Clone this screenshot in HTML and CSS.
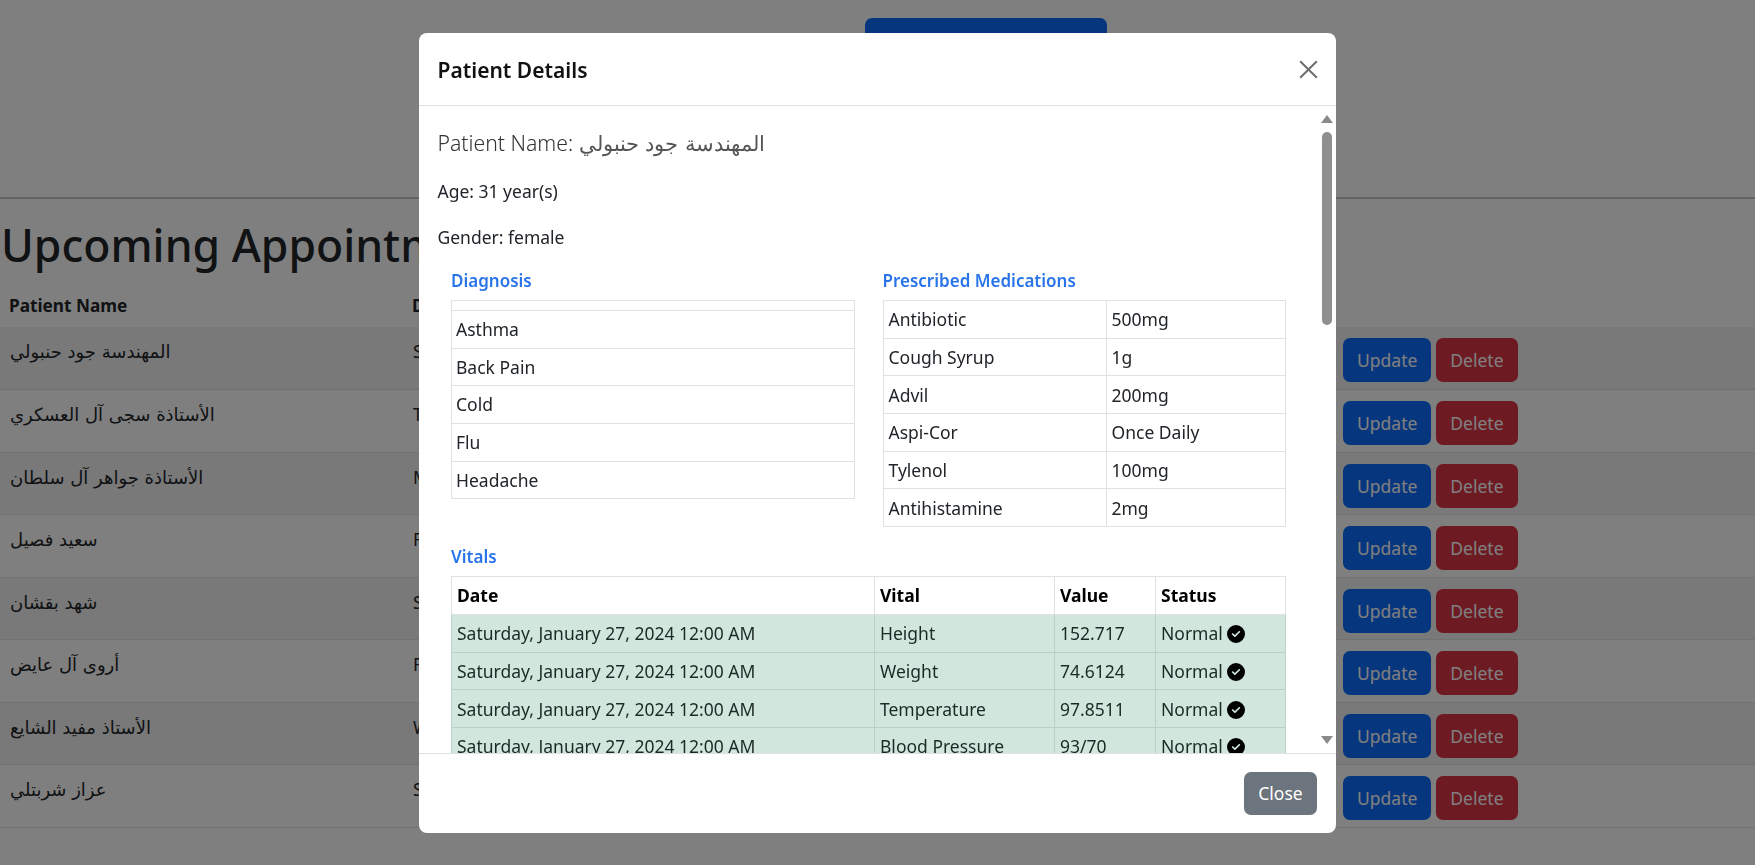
FILE: index.html
```html
<!DOCTYPE html>
<html lang="en">
<head>
<meta charset="utf-8">
<title>Patient Details</title>
<link rel="stylesheet" href="styles.css">
</head>
<body>
<svg class="defs" aria-hidden="true"><symbol id="check" viewBox="0 0 512 512"><path d="M256 512A256 256 0 1 0 256 0a256 256 0 1 0 0 512zM369 209L241 337c-9.400 9.400-24.600 9.400-33.900 0l-64-64c-9.400-9.400-9.400-24.600 0-33.900s24.600-9.400 33.900 0l47 47L335 175c9.400-9.400 24.600-9.400 33.900 0s9.400 24.600 0 33.900z"/></symbol></svg>
<div class="page">
  <div class="top"><button class="btn btn-primary top-btn">Schedule Appointment</button></div>
  <hr class="rule">
  <h1 class="page-title">Upcoming Appointments</h1>
  <table class="appts">
    <thead><tr><th class="c-name">Patient Name</th><th class="c-date">Date</th><th class="c-act"></th></tr></thead>
    <tbody>
      <tr><td><span class="ar">المهندسة جود حنبولي</span></td><td>Saturday</td><td><div class="acts"><button class="btn btn-primary">Update</button><button class="btn btn-danger">Delete</button></div></td></tr>
      <tr><td><span class="ar">الأستاذة سجى آل العسكري</span></td><td>Tuesday</td><td><div class="acts"><button class="btn btn-primary">Update</button><button class="btn btn-danger">Delete</button></div></td></tr>
      <tr><td><span class="ar">الأستاذة جواهر آل سلطان</span></td><td>Monday</td><td><div class="acts"><button class="btn btn-primary">Update</button><button class="btn btn-danger">Delete</button></div></td></tr>
      <tr><td><span class="ar">سعيد فصيل</span></td><td>Friday</td><td><div class="acts"><button class="btn btn-primary">Update</button><button class="btn btn-danger">Delete</button></div></td></tr>
      <tr><td><span class="ar">شهد بقشان</span></td><td>Saturday</td><td><div class="acts"><button class="btn btn-primary">Update</button><button class="btn btn-danger">Delete</button></div></td></tr>
      <tr><td><span class="ar">أروى آل عايض</span></td><td>Friday</td><td><div class="acts"><button class="btn btn-primary">Update</button><button class="btn btn-danger">Delete</button></div></td></tr>
      <tr><td><span class="ar">الأستاذ مفيد الشايع</span></td><td>Wednesday</td><td><div class="acts"><button class="btn btn-primary">Update</button><button class="btn btn-danger">Delete</button></div></td></tr>
      <tr><td><span class="ar">عزاز شربتلي</span></td><td>Saturday</td><td><div class="acts"><button class="btn btn-primary">Update</button><button class="btn btn-danger">Delete</button></div></td></tr>
    </tbody>
  </table>
</div>
<div class="backdrop"></div>
<div class="modal">
  <div class="modal-header">
    <h5 class="modal-title">Patient Details</h5>
    <svg class="close-x" viewBox="0 0 16 16" aria-label="Close"><path d="M1 1l14 14M15 1L1 15"/></svg>
  </div>
  <div class="modal-body">
    <h5 class="pname">Patient Name: <span class="ar">المهندسة جود حنبولي</span></h5>
    <p class="info info-age">Age: 31 year(s)</p>
    <p class="info info-gender">Gender: female</p>
    <div class="cols">
      <div class="col">
        <h6 class="sub">Diagnosis</h6>
        <div class="dlist">
          <div class="ditem ditem-empty"></div>
          <div class="ditem">Asthma</div>
          <div class="ditem">Back Pain</div>
          <div class="ditem">Cold</div>
          <div class="ditem">Flu</div>
          <div class="ditem">Headache</div>
        </div>
      </div>
      <div class="col">
        <h6 class="sub">Prescribed Medications</h6>
        <table class="grid meds">
          <tr><td class="m1">Antibiotic</td><td>500mg</td></tr>
          <tr><td>Cough Syrup</td><td>1g</td></tr>
          <tr><td>Advil</td><td>200mg</td></tr>
          <tr><td>Aspi-Cor</td><td>Once Daily</td></tr>
          <tr><td>Tylenol</td><td>100mg</td></tr>
          <tr><td>Antihistamine</td><td>2mg</td></tr>
        </table>
      </div>
    </div>
    <h6 class="sub sub-vitals">Vitals</h6>
    <table class="grid vitals">
      <thead><tr><th class="v1">Date</th><th class="v2">Vital</th><th class="v3">Value</th><th>Status</th></tr></thead>
      <tbody>
        <tr><td>Saturday, January 27, 2024 12:00 AM</td><td>Height</td><td>152.717</td><td>Normal <svg class="check"><use href="#check"/></svg></td></tr>
        <tr><td>Saturday, January 27, 2024 12:00 AM</td><td>Weight</td><td>74.6124</td><td>Normal <svg class="check"><use href="#check"/></svg></td></tr>
        <tr><td>Saturday, January 27, 2024 12:00 AM</td><td>Temperature</td><td>97.8511</td><td>Normal <svg class="check"><use href="#check"/></svg></td></tr>
        <tr><td>Saturday, January 27, 2024 12:00 AM</td><td>Blood Pressure</td><td>93/70</td><td>Normal <svg class="check"><use href="#check"/></svg></td></tr>
      </tbody>
    </table>
    <div class="sb" aria-hidden="true"><span class="sb-up"></span><span class="sb-thumb"></span><span class="sb-down"></span></div>
  </div>
  <div class="modal-footer"><button class="btn btn-secondary">Close</button></div>
</div>
</body>
</html>
```
FILE: styles.css
```css
* { box-sizing: border-box; }
html, body { margin: 0; height: 100%; overflow: hidden; }
body { font-family: "Noto Sans", "DejaVu Sans", sans-serif; font-size: 17.5px; line-height: 26px; color: #212529; background: #fff; }
.defs { display: none; }
.ar { font-family: "DejaVu Sans", sans-serif; font-size: 18px; }

.page { width: 100%; }
.top { height: 197px; padding: 18px 0 0 865px; }
.top-btn { width: 242px; height: 50px; }
.rule { margin: 0; border: 0; border-top: 2px solid #c8c8c8; }
.page-title { margin: 16px 0 0 1px; font-size: 44.5px; line-height: 60px; font-weight: 500; white-space: nowrap; }

.appts { margin-top: 11px; width: 100%; border-collapse: collapse; table-layout: fixed; }
.appts th { text-align: left; font-size: 17.2px; font-weight: 700; height: 41px; padding: 2px 8px 4px 9px; }
.appts td { height: 62.5px; padding: 11px 8px 6px 10px; vertical-align: top; border-bottom: 1px solid #dee2e6; }
.appts tbody tr:nth-child(odd) td { background: #f2f2f2; }
.c-name { width: 403px; }
.c-date { width: 932px; }
.acts { display: flex; gap: 5px; margin-left: -2px; }

.btn { border: 0; border-radius: 7px; font: inherit; color: #fff; height: 44px; padding: 0 14px; }
.btn-primary { background: #0d6efd; }
.btn-danger { background: #dc3545; }
.btn-secondary { background: #6c757d; }

.backdrop { position: fixed; inset: 0; background: rgba(0, 0, 0, .5); }

.modal { position: fixed; left: 419px; top: 33px; width: 917px; height: 800px; display: flex; flex-direction: column; background: #fff; border-radius: 8px; overflow: hidden; color: #212529; }
.modal-header { flex: none; height: 73px; display: flex; align-items: center; justify-content: space-between; padding: 2px 18px 0 18.500px; border-bottom: 1px solid #dee2e6; }
.modal-title { margin: 0; font-size: 21px; line-height: 30px; font-weight: 600; color: #111; }
.close-x { width: 19px; height: 19px; margin-top: -2px; stroke: #6e6e6e; stroke-width: 1.7; fill: none; }

.modal-body { position: relative; flex: 1; min-height: 0; overflow: hidden; padding: 22px 0 0 18.500px; }
.pname { margin: 0; font-size: 21.2px; line-height: 30px; font-weight: 300; color: #333; }
.pname .ar { font-size: 21px; color: #555; }
.info { margin: 0; line-height: 24px; }
.info-age { margin-top: 20px; }
.info-gender { margin-top: 22px; }
.cols { display: flex; gap: 28px; margin: 20px 0 0 13.500px; width: 835px; }
.col { flex: 1; min-width: 0; }
.sub { margin: 0; font-size: 17px; line-height: 24px; font-weight: 600; color: #2a74ea; }
.col .sub { margin-bottom: 7px; }
.sub-vitals { margin: 18px 0 7px 13.500px; }

.dlist { border: 1px solid #dee2e6; border-bottom: 0; }
.ditem { height: 37.7px; padding: 5px 4px; border-bottom: 1px solid #dee2e6; line-height: 27px; }
.ditem-empty { height: 10px; padding: 0; }

.grid { border-collapse: collapse; table-layout: fixed; }
.grid td, .grid th { border: 1px solid #dee2e6; height: 37.7px; padding: 0 5px; text-align: left; }
.meds { width: 100%; }
.m1 { width: 223px; }
.vitals { margin-left: 13.500px; width: 835px; }
.vitals th { color: #000; font-weight: 700; }
.vitals td { background: #d1e7dd; border-color: #bcd0c7; color: #1c2a25; }
.v1 { width: 423px; }
.v2 { width: 180px; }
.v3 { width: 101px; }
.check { width: 18px; height: 18px; vertical-align: -3px; fill: #000; }

.sb { position: absolute; right: 3px; top: 9px; bottom: 9px; width: 12px; display: flex; flex-direction: column; align-items: center; justify-content: flex-start; }
.sb-up { width: 0; height: 0; border: 6px solid transparent; border-top: 0; border-bottom: 8px solid #8a8a8a; }
.sb-thumb { width: 10px; height: 193px; margin-top: 9px; border-radius: 5px; background: #8f8f8f; }
.sb-down { width: 0; height: 0; margin-top: auto; border: 6px solid transparent; border-bottom: 0; border-top: 8px solid #8a8a8a; }

.modal-footer { flex: none; height: 80px; display: flex; align-items: center; justify-content: flex-end; padding: 0 19px 0 0; border-top: 1px solid #dee2e6; }
.modal-footer .btn { width: 73px; height: 43px; padding: 0; margin-top: -1px; }
```
